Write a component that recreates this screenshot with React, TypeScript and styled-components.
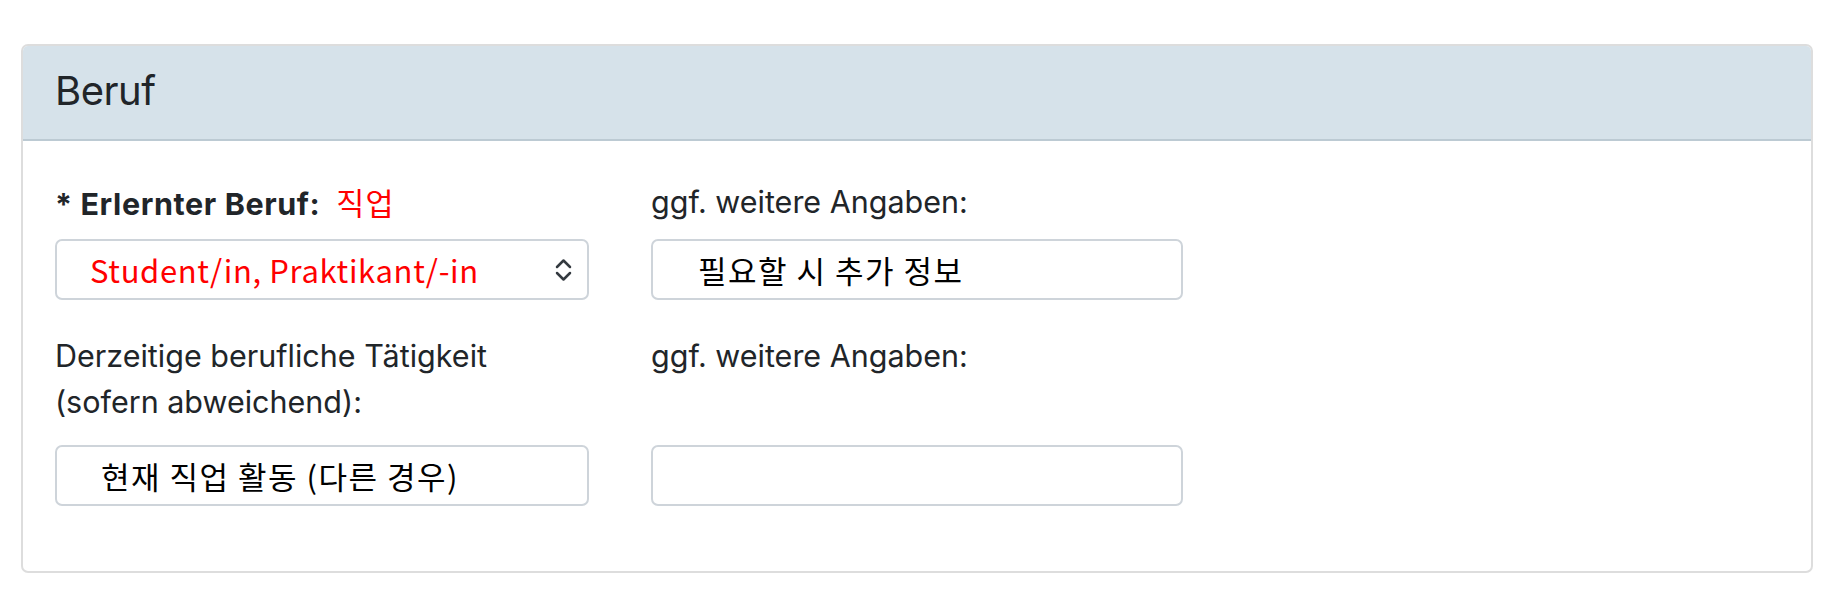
import React from "react";
import styled, { createGlobalStyle } from "styled-components";

const GlobalStyle = createGlobalStyle`
  html, body { margin: 0; padding: 0; background: #ffffff; }
  body { font-family: Inter, "Noto Sans CJK KR", sans-serif; color: #212529; }
`;

const Page = styled.div`
  padding: 44px 32px 34px 21px;
`;

const Card = styled.section`
  border: 2px solid #dddddd;
  border-radius: 7px;
  overflow: hidden;
  background: #ffffff;
`;

const CardHeader = styled.header`
  box-sizing: border-box;
  height: 95px;
  display: flex;
  align-items: center;
  padding: 0 32px 4px 32px;
  background: #d6e2ea;
  border-bottom: 2px solid #bccad3;
`;

const Title = styled.h2`
  margin: 0;
  font-family: Inter, sans-serif;
  font-weight: 400;
  font-size: 40px;
  color: #212529;
  letter-spacing: -0.5px;
`;

const CardBody = styled.div`
  padding: 38px 32px 65px 32px;
  display: grid;
  grid-template-columns: 534px 532px;
  column-gap: 62px;
  row-gap: 33px;
`;

const Field = styled.div<{ $gap: number }>`
  display: flex;
  flex-direction: column;
  justify-content: space-between;
  gap: ${(p) => p.$gap}px;
`;

const Label = styled.label<{ $bold?: boolean }>`
  font-family: Inter, "Noto Sans CJK KR", sans-serif;
  font-size: 30.5px;
  line-height: 46px;
  font-weight: ${(p) => (p.$bold ? 700 : 400)};
  letter-spacing: ${(p) => (p.$bold ? "0.6px" : "0")};
  color: #212529;
`;

const Hint = styled.span`
  font-family: "Noto Sans CJK KR", sans-serif;
  font-weight: 400;
  letter-spacing: 1px;
  color: #ff0000;
  margin-left: 16px;
`;

const Control = styled.div<{ $red?: boolean; $indent: number }>`
  position: relative;
  box-sizing: border-box;
  height: 61px;
  border: 2px solid #ced4da;
  border-radius: 7px;
  display: flex;
  align-items: center;
  padding-left: ${(p) => p.$indent}px;
  font-family: "Noto Sans CJK KR", sans-serif;
  font-size: 31px;
  letter-spacing: ${(p) => (p.$red ? "0.65px" : "1.5px")};
  color: ${(p) => (p.$red ? "#ff0000" : "#000000")};
  white-space: pre;
`;

const Chevron = styled.svg`
  position: absolute;
  right: 14px;
  top: 50%;
  transform: translateY(-50%);
`;

export default function App() {
  return (
    <>
      <GlobalStyle />
      <Page>
        <Card>
          <CardHeader>
            <Title>Beruf</Title>
          </CardHeader>
          <CardBody>
            <Field $gap={12}>
              <Label $bold>
                * Erlernter Beruf:<Hint>직업</Hint>
              </Label>
              <Control $red $indent={33}>
                Student/in, Praktikant/-in
                <Chevron width="19" height="24" viewBox="0 0 19 24" fill="none" stroke="#343a40" strokeWidth="2.5" strokeLinecap="round" strokeLinejoin="round">
                  <polyline points="3,9 9.5,2.5 16,9" />
                  <polyline points="3,15 9.5,21.5 16,15" />
                </Chevron>
              </Control>
            </Field>
            <Field $gap={12}>
              <Label>ggf. weitere Angaben:</Label>
              <Control $indent={45}>필요할 시 추가 정보</Control>
            </Field>
            <Field $gap={20}>
              <Label>
                Derzeitige berufliche Tätigkeit
                <br />
                (sofern abweichend):
              </Label>
              <Control $indent={44}>현재 직업 활동 (다른 경우)</Control>
            </Field>
            <Field $gap={20}>
              <Label>ggf. weitere Angaben:</Label>
              <Control $indent={45} />
            </Field>
          </CardBody>
        </Card>
      </Page>
    </>
  );
}
